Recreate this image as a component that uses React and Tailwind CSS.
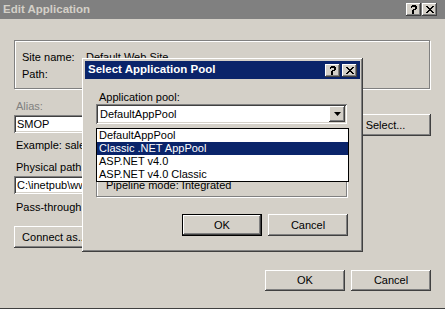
import React from 'react';

// Classic Windows 2000 style bevels
const raised =
  'shadow-[inset_-1px_-1px_0_#404040,inset_1px_1px_0_#ffffff,inset_-2px_-2px_0_#808080,inset_2px_2px_0_#d4d0c8]';
const sunken =
  'shadow-[inset_1px_1px_0_#808080,inset_-1px_-1px_0_#ffffff,inset_2px_2px_0_#404040,inset_-2px_-2px_0_#d4d0c8]';
const etched = 'border border-[#808080] shadow-[1px_1px_0_#ffffff,inset_1px_1px_0_#ffffff]';

const Button = ({ children, className = '', isDefault = false }) => (
  <div
    className={`flex shrink-0 items-center justify-center bg-[#d4d0c8] text-black ${
      isDefault ? 'border border-black' : ''
    } ${className}`}
  >
    <div className={`flex h-full w-full items-center justify-center ${raised}`}>{children}</div>
  </div>
);

const TitleButton = ({ children, className = '' }) => (
  <div
    className={`flex items-center justify-center bg-[#d4d0c8] text-black text-[11px] font-bold leading-none ${raised} ${className}`}
  >
    {children}
  </div>
);

const QuestionMark = () => (
  <svg width="8" height="9" viewBox="0 0 8 9">
    <path d="M1 1h1v-1h4v1h1v3h-1v1h-2v2h-2v-2h1v-1h2v-2h-3v1h-1z" fill="#000" />
    <path d="M2 7h2v2h-2z" fill="#000" />
  </svg>
);

const CloseX = () => (
  <svg width="8" height="7" viewBox="0 0 8 7">
    <path
      d="M0 0h2v1h1v1h2v-1h1v-1h2v1h-1v1h-1v1h-1v1h1v1h1v1h1v1h-2v-1h-1v-1h-2v1h-1v1h-2v-1h1v-1h1v-1h1v-1h-1v-1h-1v-1h-1z"
      fill="#000"
    />
  </svg>
);

const SelectPoolDialog = () => {
  const pools = ['DefaultAppPool', 'Classic .NET AppPool', 'ASP.NET v4.0', 'ASP.NET v4.0 Classic'];

  return (
    <div className="absolute left-[82px] top-[58px] h-[194px] w-[281px] bg-[#d4d0c8] p-[2px] shadow-[inset_-1px_-1px_0_#404040,inset_1px_1px_0_#ffffff,inset_-2px_-2px_0_#808080,inset_2px_2px_0_#d4d0c8]">
      {/* title bar */}
      <div className="mx-[1px] mt-[1px] flex h-[18px] items-center justify-between bg-[#0a246a] pl-[3px] pr-[3px]">
        <span className="text-[11.5px] font-bold text-white">Select Application Pool</span>
        <div className="flex gap-[2px]">
          <TitleButton className="h-[13px] w-[15px]">
            <QuestionMark />
          </TitleButton>
          <TitleButton className="h-[13px] w-[15px]">
            <CloseX />
          </TitleButton>
        </div>
      </div>

      <div className="px-[12px] pt-[12px]">
        <div className="pl-[3px] text-[11px] leading-[13px]">Application pool:</div>

        {/* combo box */}
        <div className={`flex h-[20px] w-[251px] items-center bg-white p-[2px] ${sunken}`}>
          <span className="flex-1 pl-[2px] text-[11px]">DefaultAppPool</span>
          <Button className="h-[16px] w-[16px]">
            <svg width="7" height="4" viewBox="0 0 7 4">
              <path d="M0 0h7l-3.5 4z" fill="#000" />
            </svg>
          </Button>
        </div>

        {/* pipeline group, mostly hidden under the open list */}
        <div className={`mt-[10px] flex h-[63px] w-[251px] items-end pb-[4px] pl-[9px] text-[11px] leading-[13px] ${etched}`}>
          Pipeline mode: Integrated
        </div>

        <div className="mt-[17px] flex justify-end gap-[6px] pr-[1px]">
          <Button isDefault className="h-[22px] w-[80px] text-[11px]">
            OK
          </Button>
          <Button className="h-[22px] w-[80px] text-[11px]">Cancel</Button>
        </div>
      </div>

      {/* open dropdown list */}
      <div className="absolute left-[14px] top-[70px] w-[253px] border border-black bg-white">
        {pools.map((p, i) => (
          <div
            key={p}
            className={`h-[13px] pl-[2px] text-[11px] leading-[13px] ${
              i === 1 ? 'bg-[#0a246a] text-white' : 'text-black'
            }`}
          >
            {p}
          </div>
        ))}
      </div>
    </div>
  );
};

const App = () => {
  return (
    <div className="relative h-[309px] w-[445px] overflow-hidden bg-[#d4d0c8] font-['Liberation_Sans',Arial,sans-serif] text-[11px] text-black">
      {/* outer title bar */}
      <div className="flex h-[19px] items-center justify-between bg-[#808080] pl-[3px] pr-[8px]">
        <span className="text-[11.5px] font-bold text-[#d4d0c8]">Edit Application</span>
        <div className="flex gap-[1px]">
          <TitleButton className="h-[13px] w-[15px]">
            <QuestionMark />
          </TitleButton>
          <TitleButton className="h-[13px] w-[15px]">
            <CloseX />
          </TitleButton>
        </div>
      </div>

      <div className="flex h-[290px] flex-col border-b border-b-[#404040] px-[14px]">
        {/* site info group */}
        <div className={`mt-[21px] flex h-[49px] w-[416px] flex-col gap-[4px] pl-[7px] pt-[10px] ${etched}`}>
          <div className="flex leading-[13px]">
            <span className="w-[64px]">Site name:</span>
            <span>Default Web Site</span>
          </div>
          <div className="leading-[13px]">Path:</div>
        </div>

        <div className="mt-[11px] pl-[2px] leading-[13px] text-[#808080]">Alias:</div>
        <div className="mt-[2px] flex h-[18px] w-[417px] items-start justify-between">
          <div className={`flex h-[18px] w-[300px] items-center bg-white pl-[3px] ${sunken}`}>SMOP</div>
          <Button className="mt-[-1px] h-[22px] w-[93px] text-[11px]">
            <span className="pl-[2px]">Select...</span>
          </Button>
        </div>
        <div className="mt-[6px] pl-[2px] leading-[13px]">Example: sales</div>
        <div className="mt-[9px] pl-[2px] leading-[13px]">Physical path:</div>
        <div className={`mt-[2px] flex h-[18px] w-[300px] items-center bg-white pl-[3px] ${sunken}`}>
          C:\inetpub\wwwroot
        </div>
        <div className="mt-[7px] pl-[2px] leading-[13px]">Pass-through authentication</div>
        <Button className="mt-[12px] h-[22px] w-[80px] text-[11px]">
          <span className="pl-[1px]">Connect as...</span>
        </Button>

        <div className="mt-[22px] flex justify-end gap-[6px]">
          <Button className="h-[21px] w-[80px] text-[11px]">OK</Button>
          <Button className="h-[21px] w-[80px] text-[11px]">Cancel</Button>
        </div>
      </div>

      <SelectPoolDialog />
    </div>
  );
};

export default App;
